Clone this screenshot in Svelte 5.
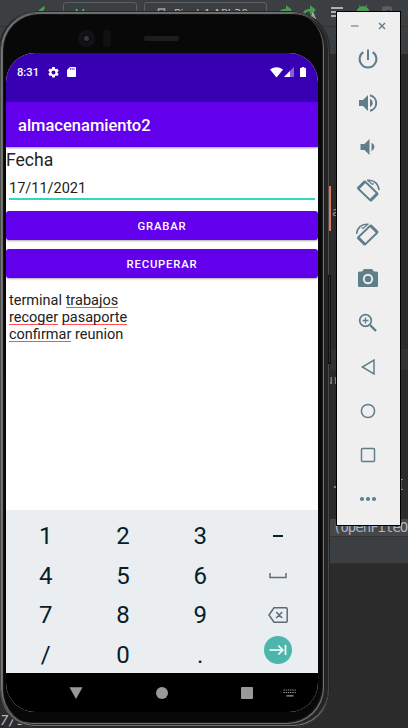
<script>
  const keys = ['1', '2', '3', '–', '4', '5', '6', 'space', '7', '8', '9', 'del', '/', '0', '.', 'next'];
  const notes = [
    [['terminal', false], ['trabajos', true]],
    [['recoger', true], ['pasaporte', true]],
    [['confirmar', true], ['reunion', false]]
  ];
  const tools = ['power', 'loud', 'quiet', 'left', 'right', 'camera', 'zoom', 'back', 'home', 'recent', 'more'];
</script>

<div class="desktop">
  <div class="ide">
    <div class="ide-bar">
      <svg class="hammer" width="12" height="10" viewBox="0 0 12 10"><path d="M0 9 3 4 8 0l1 2-2 3 2 1v4H4L3 7z" fill="#499c54" /></svg>
      <div class="combo app"><svg width="10" height="6" viewBox="0 0 10 6"><path d="M1 1l2 3M9 1 7 4M4 5h3" stroke="#3ddc84" stroke-width="1.3" /></svg><span>app</span></div>
      <div class="combo device"><svg width="9" height="10" viewBox="0 0 9 10"><path d="M1.500 10V1h6v9" fill="none" stroke="#9aa7b0" stroke-width="1.600" /></svg><span>Pixel 4 API 30</span></div>
      <svg class="ide-icons" width="130" height="22" viewBox="0 0 130 22" fill="none">
        <path d="M1 12c0-4 3-6 8-6" stroke="#499c54" stroke-width="2.500" /><path d="m8 1 6 5-6 5z" fill="#499c54" />
        <path d="M29 15c-6-4-3-9 4-9" stroke="#499c54" stroke-width="2.500" /><path d="m32 1 6 5-6 5z" fill="#499c54" />
        <path d="m32.500 15.500 2.500-6 2.500 6m-4-2h3" stroke="#afb1b3" stroke-width="1.500" />
        <path d="M53 4h12M53 8h8M53 12h12" stroke="#afb1b3" stroke-width="2" />
        <path d="M79 8c0-7 12-7 12 0zM81 1l2 3M89 1l-2 3" fill="#499c54" stroke="#499c54" />
        <path d="M104 3q5-2 10 0v9h-10z" fill="#5a5d5f" /><path d="M109 6h3v4h-3z" fill="#333" />
      </svg>
    </div>
    <div class="ide-tabs"></div>
    <div class="editor"></div>
    <div class="code-row"><span>(openFileO</span></div>
    <div class="panel"></div>
    <div class="output"><span>7/1</span></div>
  </div>
  <i class="line-band"></i>
  <span class="peek a">a</span>
  <span class="peek u">ur</span>
  <span class="peek dot">.</span>
  <span class="peek bracket">[</span>
  <i class="power-key"></i>
  <i class="volume-key"></i>

  <div class="phone">
    <div class="bezel">
      <div class="sensors">
        <span class="camera"><i></i></span>
        <span class="sensor"></span>
        <span class="speaker"></span>
      </div>
      <div class="screen">
        <div class="status">
          <span class="clock">8:31</span>
          <svg class="gear" width="12" height="12" viewBox="2 2 20 20" fill="#fff"><path d="M19.140 12.940c.04-.3.06-.61.06-.94s-.02-.64-.07-.94l2.030-1.580a.49.49 0 0 0 .12-.61l-1.920-3.320a.49.49 0 0 0-.59-.22l-2.390.96a7 7 0 0 0-1.620-.94l-.36-2.540A.48.48 0 0 0 13.920 2h-3.840a.48.48 0 0 0-.47.41l-.36 2.540c-.59.24-1.130.57-1.620.94l-2.390-.96a.49.49 0 0 0-.59.22L2.740 8.470a.48.48 0 0 0 .12.61l2.030 1.580a6.500 6.500 0 0 0 0 1.880l-2.030 1.580a.49.49 0 0 0-.12.61l1.920 3.320c.12.22.37.29.59.22l2.390-.96c.5.38 1.030.7 1.620.94l.36 2.540c.05.24.24.41.48.41h3.840c.24 0 .44-.17.47-.41l.36-2.540a7 7 0 0 0 1.620-.94l2.390.96c.22.08.47 0 .59-.22l1.920-3.320a.48.48 0 0 0-.12-.61zM12 15.600A3.600 3.600 0 1 1 12 8.400a3.600 3.600 0 0 1 0 7.200z" /></svg>
          <svg class="sd" width="9" height="10" viewBox="0 0 9 10"><path d="M3 0h5q1 0 1 1v8q0 1-1 1H1Q0 10 0 9V3z" fill="#fff" /><path d="M3.500 1v2M5.200 1v2M7 1v2" stroke="#3700b3" stroke-width=".7" /></svg>
          <svg class="wifi" width="13" height="11" viewBox="0 0 13 11"><path d="M0 2.500Q6.500-2 13 2.500L6.500 10.500z" fill="#fff" /></svg>
          <svg class="cell" width="10" height="10" viewBox="0 0 10 10"><path d="M10 0v10H0z" fill="#8763d0" /><path d="M6 4V10H0z" fill="#fff" /></svg>
          <svg class="battery" width="6" height="10" viewBox="0 0 6 10"><path d="M2 0h2v.7h1q1 0 1 1V10H0V1.700q0-1 1-1h1z" fill="#fff" /></svg>
        </div>
        <div class="appbar">almacenamiento2</div>
        <div class="content">
          <div class="label">Fecha</div>
          <div class="field">17/11/2021</div>
          <button class="first">GRABAR</button>
          <button>RECUPERAR</button>
          <div class="notes">
            {#each notes as line}
              <div>{#each line as [word, marked], i}{i ? ' ' : ''}<span class:marked>{word}</span>{/each}</div>
            {/each}
          </div>
        </div>
        <div class="keyboard">
          {#each keys as k}
            <div class="key">
              {#if k === '–'}
                <svg width="10" height="2" viewBox="0 0 10 2"><path d="M0 1h10" stroke="#04202a" stroke-width="2" /></svg>
              {:else if k === 'space'}
                <svg width="18" height="6" viewBox="0 0 18 6"><path d="M1 0v4.500h16V0" fill="none" stroke="#5d6f79" stroke-width="1.500" /></svg>
              {:else if k === 'del'}
                <svg width="20" height="16" viewBox="0 0 20 16" fill="none" stroke="#5d6b74" stroke-width="1.500"><path d="M6 .8h12q1.200 0 1.200 1.200v12q0 1.200-1.200 1.200H6L1 8zM8.200 5l6 6m0-6-6 6" /></svg>
              {:else if k === 'next'}
                <span class="next"><svg width="18" height="12" viewBox="0 0 18 12" fill="none" stroke="#fff" stroke-width="1.700"><path d="M.5 6h13M9.300 1.500 13.800 6l-4.500 4.500M16.500 1v10" /></svg></span>
              {:else}{k}{/if}
            </div>
          {/each}
        </div>
        <div class="nav">
          <svg width="14" height="12" viewBox="0 0 14 12"><path d="M.8.500h12.400L7 11.500z" fill="#999" stroke="#999" stroke-width=".5" /></svg>
          <svg width="12" height="12" viewBox="0 0 12 12"><circle cx="6" cy="6" r="6" fill="#999" /></svg>
          <svg width="12" height="12" viewBox="0 0 12 12"><rect width="12" height="12" rx="1" fill="#999" /></svg>
          <svg class="ime" width="14" height="8" viewBox="0 0 14 8" stroke="#999" stroke-width="1.100"><path d="M.5 1h13M.5 3.500h13" stroke-dasharray="1.300 .9" /><path d="M3.500 6.900h7" /></svg>
        </div>
      </div>
    </div>
  </div>

  <div class="toolbar">
    <div class="window-controls">
      <svg width="8" height="8" viewBox="0 0 8 8"><path d="M0 4h7.500" stroke="#9db0b8" stroke-width="2" /></svg>
      <svg width="8" height="8" viewBox="0 0 8 8"><path d="m1 1 6 6m0-6L1 7" stroke="#607d8b" stroke-width="1.400" /></svg>
    </div>
    {#each tools as t}
      <div class="tool">
        <svg width="24" height="24" viewBox="0 0 24 24" fill="none" stroke="#607d8b" stroke-width="1.800">
          {#if t === 'power'}
            <path d="M12 2.500v10.500" stroke-width="2" /><path d="M7.300 5.100a8.400 8.400 0 1 0 9.400 0" stroke-width="2" />
          {:else if t === 'loud'}
            <path d="M3 9v6h4l5 5V4L7 9z" fill="#607d8b" stroke="none" /><path d="M14 7.700v8.600q2.800-1.500 2.800-4.300T14 7.700z" fill="#607d8b" stroke="none" /><path d="M14 4.200a8 8 0 0 1 0 15.600" stroke-width="2" />
          {:else if t === 'quiet'}
            <path d="M4.500 9v6h4l5 5V4l-5 5z" fill="#607d8b" stroke="none" /><path d="M15.500 7.700v8.600q3-1.500 3-4.300t-3-4.300z" fill="#607d8b" stroke="none" />
          {:else if t === 'left' || t === 'right'}
            <g transform={t === 'right' ? 'translate(23.500 0) scale(-1 1)' : undefined}>
              <path d="m2 9.500 7-7 12.500 12-7 7z" stroke-width="1.800" stroke-linejoin="round" />
              <path d="m2 9.500 7-7M14.500 21.500l7-7" stroke-width="3" />
              <path d="M12 1.200C18 .7 22.500 5 23 11" stroke-width="1.500" /><path d="m11 .8 5.500 4.700 1.200-1.200" stroke-width="1.200" />
            </g>
          {:else if t === 'camera'}
            <path d="M8 2h8l2 2.500h2.500Q22 4.500 22 6v12.500q0 1.500-1.500 1.500h-17Q2 20 2 18.500V6q0-1.500 1.500-1.500H6z" fill="#607d8b" stroke="none" /><circle cx="12" cy="12" r="4.200" stroke="#efefef" stroke-width="1.900" />
          {:else if t === 'zoom'}
            <circle cx="9.500" cy="9.500" r="5.800" stroke-width="1.700" /><path d="M9.500 6.500v6M6.500 9.500h6" stroke-width="1.300" /><path d="m14 14 6 6" stroke-width="2.400" />
          {:else if t === 'back'}
            <path d="M18 5v14L6.300 12z" stroke-width="1.500" />
          {:else if t === 'home'}
            <circle cx="12" cy="12" r="6.600" stroke-width="1.500" />
          {:else if t === 'recent'}
            <rect x="5.500" y="5.500" width="13" height="13" rx="1" stroke-width="1.500" />
          {:else}
            <g fill="#607d8b" stroke="none"><circle cx="6" cy="12" r="2.100" /><circle cx="12" cy="12" r="2.100" /><circle cx="18" cy="12" r="2.100" /></g>
          {/if}
        </svg>
      </div>
    {/each}
  </div>
</div>

<style>
  :global(body) { background: #2b2b2b; }
  .desktop { position: relative; width: 408px; height: 728px; overflow: hidden; font-family: Roboto, sans-serif; }
  svg { display: block; flex: none; }
  .ide { display: flex; flex-direction: column; height: 728px; font-family: "DejaVu Sans Mono", "Liberation Mono", monospace; }
  .ide-bar { height: 27px; background: #3c3f41; border-bottom: 1px solid #313335; display: flex; align-items: flex-start; box-sizing: border-box; }
  .hammer { margin: 6px 0 0 36px; }
  .combo { box-sizing: border-box; height: 24px; margin-top: 2px; border: 1px solid #5e6163; border-radius: 3px; display: flex; font: 11px/11px "DejaVu Sans", sans-serif; color: #bbb; padding-top: 5px; }
  .app { width: 75px; margin-left: 15px; padding-left: 11px; gap: 6px; }
  .app span { padding-top: 3px; }
  .device { width: 125px; margin-left: 7px; padding-left: 12px; gap: 8px; }
  .device span { white-space: nowrap; }
  .ide-icons { margin: 4px 0 0 11px; }
  .ide-tabs { height: 27px; background: #3c3f41; }
  .editor { height: 465px; background: #2b2b2b; }
  .code-row { height: 18px; background: #454749; border-bottom: 1px solid #333; font-size: 14px; line-height: 16px; color: #a9b7c6; box-sizing: border-box; padding-left: 333px; white-space: nowrap; }
  .code-row span { letter-spacing: -1px; }
  .panel { height: 26px; background: #3c3f41; border-bottom: 1px solid #323232; }
  .output { flex: 1; background: #2b2b2b; display: flex; align-items: flex-end; color: #a9b7c6; font-size: 14px; font-style: italic; line-height: 15px; }
  .peek { position: absolute; font: 13px/16px "DejaVu Sans Mono", monospace; color: #8398ab; }
  .a { left: 332px; top: 204px; }
  .u { left: 325px; top: 372px; color: #a99168; }
  .dot { left: 331px; top: 476px; color: #7ea2d0; }
  .bracket { left: 397px; top: 477px; color: #aa9370; }
  .line-band { position: absolute; left: 329px; right: 0; top: 349px; height: 21px; background: #323232; }
  .power-key { position: absolute; left: 329px; top: 186px; width: 2px; height: 45px; background: #dd785d; z-index: 1; }
  .volume-key { position: absolute; left: 328px; top: 275px; width: 1px; height: 87px; border: 1px solid #111; background: #303030; z-index: 1; }
  .phone { position: absolute; left: -1px; top: 11px; width: 331px; height: 716px; box-sizing: border-box; border-radius: 38px 38px 36px 36px; padding: 2px; background: linear-gradient(#777, #333 12px, #505050 80px, #454545 690px, #777); box-shadow: inset 0 0 0 1px #242424; }
  .bezel { height: 100%; box-sizing: border-box; border-radius: 36px; background: #080808; padding: 40px 10px 12px 5px; box-shadow: inset 2px 1px 1px #777, inset -4px -1px 0 #242424, inset -5px -2px 0 #707070, inset -6px -3px 1px #1e1e1e; display: flex; flex-direction: column; position: relative; }
  .sensors { position: absolute; left: 77px; top: 16px; display: flex; align-items: center; height: 18px; }
  .camera { width: 17px; height: 17px; border-radius: 50%; background: #131314; display: grid; place-items: center; }
  .camera i { width: 5px; height: 5px; border-radius: 50%; background: #383846; border: 2px solid #0e0e12; }
  .sensor { width: 8px; height: 17px; border-radius: 4px; background: #101010; margin-left: 8px; }
  .speaker { width: 35px; height: 5px; border-radius: 2px; background: #1d1d1d; margin-left: 33px; }
  .screen { width: 312px; height: 659px; border-radius: 29px; overflow: hidden; background: #fff; display: flex; flex-direction: column; }
  .status { height: 49px; flex: none; box-sizing: border-box; background: #3700b3; display: flex; align-items: flex-start; padding: 13px 12px 0 11px; color: #fff; }
  .clock { font-size: 11.200px; line-height: 14px; font-weight: 500; width: 31px; }
  .gear { width: 11px; height: 11px; margin: 1px 8px 0 0; }
  .sd { margin-top: 1px; }
  .wifi { margin: 1px 1px 0 auto; }
  .cell { margin: 1px 6px 0 0; }
  .battery { margin-top: 1px; }
  .appbar { height: 45px; flex: none; box-sizing: border-box; background: #6200ee; color: #fff; font-size: 16.500px; font-weight: 500; line-height: 47px; padding-left: 12px; box-shadow: 0 1px 2px #0006; }
  .content { flex: 1; min-height: 0; color: #222; }
  .label { font-size: 17.600px; line-height: 20px; padding-top: 3px; }
  .field { margin: 6px 3px 0 3px; height: 22px; line-height: 26px; border-bottom: 2px solid #32d7c4; font-size: 14.500px; }
  button { display: block; width: 312px; height: 29px; margin: 9px 0 0; padding: 2px 0 0; border: 0; border-radius: 3px; background: #6200ee; color: #fff; font: 500 11.300px/27px Roboto, sans-serif; letter-spacing: .8px; box-shadow: 0 1px 2px #0005; }
  button.first { margin-top: 11px; }
  .notes { margin: 14px 3px 0; font-size: 14.500px; line-height: 17px; }
  .notes div { height: 17px; }
  .marked { background: linear-gradient(#ff5252, #ff5252) 0 15px / 100% 1px no-repeat; display: inline-block; height: 17px; }
  .keyboard { height: 163px; flex: none; box-sizing: border-box; background: #ebeef1; padding: 6px 1px 0 1px; display: grid; grid-template-columns: repeat(4, 77.300px); grid-template-rows: repeat(4, 39.600px); color: #04202a; font-size: 24px; }
  .key { display: flex; align-items: center; justify-content: center; padding-top: 1px; box-sizing: border-box; }
  .next { width: 28px; height: 28px; border-radius: 50%; background: #4db6ac; display: grid; place-items: center; margin-top: -11px; }
  .nav { height: 39px; flex: none; background: #000; display: flex; align-items: center; padding: 0 0 0 63px; gap: 73px; box-sizing: border-box; }
  .nav .ime { margin-left: -43px; }
  .toolbar { position: absolute; left: 336px; top: 11px; width: 65px; height: 515px; box-sizing: border-box; border: 1px solid #000; background: #efefef; z-index: 2; }
  .window-controls { height: 25px; display: flex; align-items: center; gap: 19px; padding: 3px 0 0 14px; box-sizing: border-box; }
  .tool { height: 44px; display: flex; align-items: center; justify-content: center; padding-right: 1px; }
</style>
